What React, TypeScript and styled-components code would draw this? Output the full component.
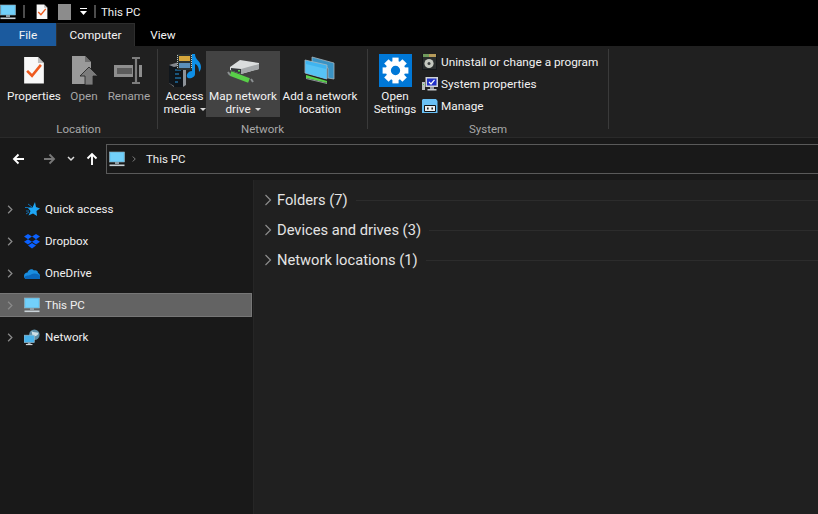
import { FC, ReactNode } from 'react';
import styled, { createGlobalStyle } from 'styled-components';

const GlobalStyle = createGlobalStyle`
    html, body {
        margin: 0;
        padding: 0;
        background: #191919;
    }
    * {
        box-sizing: border-box;
    }
`

const Window = styled.div`
    width: 818px;
    height: 514px;
    overflow: hidden;
    display: flex;
    flex-direction: column;
    background: #191919;
    color: #fff;
    font-family: Roboto, "Liberation Sans", sans-serif;
    font-size: 12px;
`

const TitleBar = styled.div`
    height: 23px;
    background: #000;
    display: flex;
    align-items: center;
`

const TitleDivider = styled.div<{ $left: number }>`
    width: 2px;
    height: 13px;
    background: #4c4c4c;
    margin-left: ${props => props.$left}px;
    margin-right: 11px;
`

const TitleSpacer = styled.div<{ $width: number }>`
    width: ${props => props.$width}px;
    flex: none;
`

const TitleText = styled.span`
    font-size: 11.5px;
    color: #f0f0f0;
    margin-left: -6px;
`

const TabBar = styled.div`
    height: 23px;
    background: #000;
    display: flex;
`

const Tab = styled.div<{ $kind?: 'file' | 'active' }>`
    width: ${props => props.$kind === 'active' ? '79px' : '56px'};
    display: flex;
    align-items: center;
    justify-content: center;
    color: #f4f4f4;
    font-size: 11.8px;
    background: ${props => props.$kind === 'file' ? '#1b5a9e' : props.$kind === 'active' ? '#202020' : 'transparent'};
    border: ${props => props.$kind === 'active' ? '1px solid #2e2e2e' : 'none'};
    border-bottom: none;
`

const Ribbon = styled.div`
    height: 92px;
    background: #202020;
    display: flex;
    padding-top: 3px;
    border-bottom: 1px solid #2a2a2a;
`

const Group = styled.div<{ $width: number }>`
    width: ${props => props.$width}px;
    display: flex;
    flex-direction: column;
    border-right: 1px solid #3a3a3a;
    height: 80px;
    flex: none;
`

const GroupBody = styled.div<{ $left: number }>`
    height: 68px;
    display: flex;
    padding-left: ${props => props.$left}px;
`

const GroupLabel = styled.div`
    height: 20px;
    margin-top: 2px;
    text-align: center;
    font-size: 11.5px;
    color: #a8a8a8;
    line-height: 20px;
`

const LargeButton = styled.div<{ $width: number; $hot?: boolean; $dim?: boolean }>`
    width: ${props => props.$width}px;
    height: 66px;
    margin-top: 2px;
    display: flex;
    flex-direction: column;
    align-items: center;
    flex: none;
    background: ${props => props.$hot ? '#434343' : 'transparent'};
    border: 1px solid ${props => props.$hot ? '#434343' : 'transparent'};
    color: ${props => props.$dim ? '#a6a6a6' : '#f2f2f2'};
`

const LargeIcon = styled.div`
    height: 35px;
    width: 100%;
    display: flex;
    align-items: center;
    justify-content: center;
    margin-top: 1px;
`

const LargeLabel = styled.div`
    text-align: center;
    line-height: 13px;
    margin-top: 2px;
    font-size: 11.7px;
    white-space: nowrap;
`

const Caret = styled.span`
    display: inline-block;
    width: 0;
    height: 0;
    border-left: 3px solid transparent;
    border-right: 3px solid transparent;
    border-top: 3px solid #d8d8d8;
    margin-left: 4px;
    vertical-align: 2px;
`

const SmallList = styled.div`
    display: flex;
    flex-direction: column;
    margin-top: 2px;
    margin-left: 4px;
`

const SmallRow = styled.div`
    height: 22px;
    display: flex;
    align-items: center;
    gap: 3px;
    font-size: 11.8px;
    color: #f2f2f2;
    white-space: nowrap;
`

const NavBar = styled.div`
    height: 41px;
    display: flex;
    align-items: center;
    padding-left: 12px;
    background: #191919;
    flex: none;
`

const NavIcon = styled.div<{ $width: number }>`
    width: ${props => props.$width}px;
    display: flex;
    align-items: center;
    flex: none;
`

const AddressBar = styled.div`
    flex: 1;
    height: 30px;
    margin-right: -2px;
    border: 1px solid #5a5a5a;
    display: flex;
    align-items: center;
    padding-left: 2px;
    color: #eee;
    font-size: 11.5px;
`

const CrumbArrow = styled.div`
    margin-left: 7px;
    display: flex;
`

const Crumb = styled.span`
    margin-left: 10px;
`

const Content = styled.div`
    flex: 1;
    display: flex;
    min-height: 0;
`

const Sidebar = styled.div`
    width: 253px;
    flex: none;
    background: #191919;
    padding-top: 18px;
    display: flex;
    flex-direction: column;
`

const TreeRow = styled.div<{ $selected?: boolean }>`
    height: 24px;
    margin-bottom: 8px;
    width: 252px;
    display: flex;
    align-items: center;
    padding-left: 7px;
    font-size: 11.6px;
    color: #f0f0f0;
    background: ${props => props.$selected ? '#636363' : 'transparent'};
    border: 1px solid ${props => props.$selected ? '#777' : 'transparent'};
    border-left-width: 0;
`

const TreeIcon = styled.div`
    width: 16px;
    height: 16px;
    margin-left: 11px;
    margin-right: 5px;
    display: flex;
    align-items: center;
    justify-content: center;
`

const Main = styled.div`
    flex: 1;
    background: #202020;
    border-left: 1px solid #262626;
    margin-top: 1px;
    padding-top: 5px;
`

const Section = styled.div`
    height: 30px;
    display: flex;
    align-items: center;
    padding-left: 10px;
    font-size: 14.7px;
    color: #e4e4e4;
`

const SectionTitle = styled.span`
    margin-left: 5px;
    white-space: nowrap;
`

const SectionRule = styled.div`
    flex: 1;
    height: 1px;
    margin-left: 8px;
    background: #2c2c2c;
`

const Chevron: FC<{ size?: number; color: string; weight?: number }> = ({ size = 8, color, weight = 1.2 }) => (
    <svg width={size} height={size * 1.5} viewBox="0 0 8 12" fill="none">
        <path d="M1.5 1 L6.5 6 L1.5 11" stroke={color} strokeWidth={weight} />
    </svg>
)

const PcIcon: FC = () => (
    <svg width="16" height="16" viewBox="0 0 16 16">
        <rect x="0.5" y="1" width="15" height="10" fill="#5cc4f2" stroke="#9fb7c4" strokeWidth="0.6" />
        <rect x="1.5" y="2" width="13" height="8" fill="#72d0fa" />
        <rect x="6" y="11" width="4" height="2" fill="#8f9ea6" />
        <rect x="0.5" y="13.5" width="15" height="1.6" fill="#c8d2d8" />
    </svg>
)

const DocCheckIcon: FC<{ size: number }> = ({ size }) => (
    <svg width={size} height={size * 1.3} viewBox="0 0 22 29">
        <path d="M1 1 H15 L21 7 V28 H1 Z" fill="#f8f8f8" />
        <path d="M15 1 L21 7 H15 Z" fill="#bdbdbd" />
        <path d="M4 15 L9 20 L18 9" stroke="#ee5a1e" strokeWidth="2.6" fill="none" />
    </svg>
)

const OpenIcon = () => (
    <svg width="27" height="31" viewBox="0 0 27 31">
        <path d="M1 1 H14 L20 7 V29 H1 Z" fill="#9a9a9a" />
        <path d="M14 1 L20 7 H14 Z" fill="#6e6e6e" />
        <path d="M18 12 L27 21 H22 V30 H14 V21 H9 Z" fill="#7b7b7b" stroke="#202020" strokeWidth="0.8" />
    </svg>
)

const RenameIcon = () => (
    <svg width="30" height="27" viewBox="0 0 30 27">
        <rect x="0" y="8" width="28" height="12" fill="#8e8e8e" />
        <rect x="3" y="11" width="15" height="6" fill="#5c5c5c" />
        <rect x="19" y="0" width="6" height="27" fill="#202020" />
        <path d="M18 1 H26 M22 1 V26 M18 26 H26" stroke="#7d7d7d" strokeWidth="2.2" fill="none" />
    </svg>
)

const AccessMediaIcon = () => (
    <svg width="34" height="33" viewBox="0 0 34 33">
        <path d="M1 11 L11 8 L15 11 V33 H6 L1 29 Z" fill="#84888e" />
        <path d="M1 11 L6 13 V32 L1 29 Z" fill="#10161c" />
        <path d="M6 13 L15 11 V33 H6 Z" fill="#0f1419" />
        <path d="M7 16 H13 M7 20 H11 M7 24 H13 M7 28 H10" stroke="#2795e0" strokeWidth="1" />
        <path d="M15 11 L18 13 V31 L15 33 Z" fill="#8d9298" />
        <rect x="9" y="0" width="15" height="16" fill="#2a3130" />
        <path d="M9.5 1 V15 M23.5 1 V15" stroke="#c0c6c0" strokeWidth="1" strokeDasharray="1 1" />
        <rect x="11" y="2" width="11" height="5" fill="#d5a63c" />
        <rect x="11" y="9" width="11" height="5" fill="#5b8fb8" />
        <path d="M24 0 H27 C27 6 33 7 33 13 C33 15 32 17 31 18 C31 14 30 11 27 10 V20 C27 23 23 25 20 24 C17 22 20 17 24 17 Z" fill="#0e8fe6" />
    </svg>
)

const DriveIcon = () => (
    <svg width="33" height="24" viewBox="0 0 33 24">
        <path d="M3 8 L13 1 L32 4 V10 L14 15 L3 11 Z" fill="#dadddd" />
        <path d="M14 10 L32 5 V10 L14 15 Z" fill="#a4a8aa" />
        <path d="M4 9 L14 10 V15 L4 11.5 Z" fill="#34383a" />
        <rect x="11" y="11" width="2" height="1.5" fill="#53e04a" />
        <path d="M3.5 14.5 L22 21.5" stroke="#58cf48" strokeWidth="5" />
        <path d="M1 13 L3 16 M24 20 L26 23" stroke="#8c9092" strokeWidth="2" />
    </svg>
)

const NetworkLocationIcon = () => (
    <svg width="32" height="30" viewBox="0 0 32 30">
        <path d="M8 1 L30 7 V23 L24 22 V12 L8 7 Z" fill="#3a93c4" stroke="#a4b4bc" strokeWidth="0.8" />
        <path d="M1 4 L23 9 V23 L1 17 Z" fill="#3fb4f0" stroke="#a8bac2" strokeWidth="0.8" />
        <path d="M2 8 L22 13 V23 L2 17 Z" fill="#57c3f5" />
        <path d="M2 19 L23 25 V27 L2 22 Z" fill="#5bd14c" />
        <path d="M2 22 L23 27 V28 L2 23 Z" fill="#8e9499" />
    </svg>
)

const SettingsIcon = () => (
    <svg width="33" height="33" viewBox="0 0 32 32">
        <rect width="32" height="32" fill="#0078d7" />
        <g transform="translate(16 16)" fill="#fff">
            {[0, 45, 90, 135, 180, 225, 270, 315].map(angle => (
                <rect key={angle} x="-3" y="-12.5" width="6" height="6" transform={`rotate(${angle})`} />
            ))}
            <path fillRule="evenodd" d="M0 -9.5 A9.5 9.5 0 1 1 0 9.5 A9.5 9.5 0 1 1 0 -9.5 Z M0 -4.5 A4.5 4.5 0 1 0 0 4.5 A4.5 4.5 0 1 0 0 -4.5 Z" />
        </g>
    </svg>
)

const UninstallIcon = () => (
    <svg width="16" height="16" viewBox="0 0 16 16">
        <rect x="0" y="0" width="15" height="16" fill="#14181a" />
        <rect x="1" y="0" width="6" height="3" fill="#6f9a5c" />
        <rect x="7" y="0" width="7" height="3" fill="#b59a5a" />
        <rect x="1" y="3" width="13" height="12" fill="#2a2e2e" />
        <circle cx="7" cy="9.5" r="4.6" fill="#c4c8c0" />
        <circle cx="7" cy="9.5" r="1.5" fill="#3c4040" />
    </svg>
)

const SystemPropsIcon = () => (
    <svg width="16" height="16" viewBox="0 0 16 16">
        <rect x="0" y="6" width="3" height="8" fill="#b8bcbc" />
        <rect x="1" y="8" width="1" height="1" fill="#4ecf45" />
        <rect x="3.5" y="1" width="12.5" height="10" fill="#d0d4d8" />
        <rect x="5" y="2.5" width="9.5" height="7" fill="#2030c8" />
        <path d="M7 6 L9 8 L12.5 3.8" stroke="#fff" strokeWidth="1.2" fill="none" />
        <rect x="8" y="11" width="4" height="2" fill="#9a9ea2" />
        <rect x="5.5" y="13" width="9" height="1.5" fill="#c4c8cc" />
    </svg>
)

const ManageIcon = () => (
    <svg width="16" height="16" viewBox="0 0 16 16">
        <path d="M1 1 H14 L15.5 3 V15 H0 V2 Z" fill="#69c0f5" />
        <rect x="2" y="7" width="12" height="7" rx="1" fill="#101214" />
        <rect x="3" y="8" width="10" height="5" fill="#eceff0" />
        <rect x="5" y="9.5" width="1.6" height="2" fill="#222" />
        <rect x="9.4" y="9.5" width="1.6" height="2" fill="#222" />
    </svg>
)

const QuickAccessIcon = () => (
    <svg width="16" height="16" viewBox="0 0 16 16">
        <path d="M11 1 L12 6 L16 7.5 L12.5 10 L13 15 L9 12.5 L4.5 14.5 L6.5 10 L3.5 6.5 L8.5 6.5 Z" fill="#1ea6f5" />
        <path d="M4 3 L8 6 M1 6.5 H4 M2 10 H5 M2 13 L5 11" stroke="#0f6fb4" strokeWidth="1" />
    </svg>
)

const DropboxIcon = () => (
    <svg width="16" height="15" viewBox="0 0 16 15">
        <path d="M4 0 L8 2.6 L4 5.2 L0 2.6 Z M12 0 L16 2.6 L12 5.2 L8 2.6 Z M4 5.2 L8 7.8 L4 10.4 L0 7.8 Z M12 5.2 L16 7.8 L12 10.4 L8 7.8 Z M8 9 L12 11.6 L8 14.4 L4 11.6 Z" fill="#0b61ff" />
    </svg>
)

const OneDriveIcon = () => (
    <svg width="16" height="11" viewBox="0 0 16 11">
        <path d="M3.5 4.5 C4 1.5 8 0 10 2.5 C12 1.8 14 3 14 5 C15.5 5.5 16 7 16 8 L16 11 H2.5 C0.5 11 0 9.5 0 8 C0 6 1.5 4.5 3.5 4.5 Z" fill="#1a8ee0" />
        <path d="M0.4 9 C2 7 5 8 7 6.5 C10 5 13 5 16 8 L16 11 H2.5 C1.2 11 0.6 10 0.4 9 Z" fill="#0a68bd" />
    </svg>
)

const NetworkIcon = () => (
    <svg width="17" height="17" viewBox="0 0 17 17">
        <circle cx="11" cy="5.6" r="5.6" fill="#5d8ea8" />
        <path d="M8 1.5 C10 3.5 13 2.5 15.5 3.5 C15 7 11 8 9 6.5 Z" fill="#cfe0e8" />
        <rect x="0" y="6" width="11" height="8" fill="#48b2ea" stroke="#a8bcc6" strokeWidth="0.6" />
        <rect x="4" y="14" width="3" height="1.4" fill="#a0a8ad" />
        <rect x="2" y="15.4" width="7" height="1.2" fill="#d0d4d8" />
    </svg>
)

const NavArrow: FC<{ d: string; color: string }> = ({ d, color }) => (
    <svg width="14" height="14" viewBox="0 0 14 14" fill="none">
        <path d={d} stroke={color} strokeWidth="1.9" />
    </svg>
)

const TreeItem: FC<{ icon: ReactNode; label: string; selected?: boolean }> = ({ icon, label, selected }) => (
    <TreeRow $selected={selected}>
        <Chevron size={6} color="#8a8a8a" weight={1.7} />
        <TreeIcon>{icon}</TreeIcon>
        {label}
    </TreeRow>
)

const GroupSection: FC<{ label: string }> = ({ label }) => (
    <Section>
        <Chevron color="#8c8c8c" />
        <SectionTitle>{label}</SectionTitle>
        <SectionRule />
    </Section>
)

const App: FC = () => {
    return (
        <Window>
            <GlobalStyle />
            <TitleBar>
                <PcIcon />
                <TitleDivider $left={7} />
                <DocCheckIcon size={12} />
                <TitleSpacer $width={10} />
                <svg width="13" height="16" viewBox="0 0 13 16">
                    <rect width="13" height="16" fill="#8c8c8c" />
                </svg>
                <TitleSpacer $width={8} />
                <svg width="9" height="8" viewBox="0 0 9 8">
                    <rect x="1" y="0" width="7" height="1" fill="#fff" />
                    <path d="M1 3 H8 L4.5 7 Z" fill="#fff" />
                </svg>
                <TitleDivider $left={6} />
                <TitleText>This PC</TitleText>
            </TitleBar>
            <TabBar>
                <Tab $kind="file">File</Tab>
                <Tab $kind="active">Computer</Tab>
                <Tab>View</Tab>
            </TabBar>
            <Ribbon>
                <Group $width={158}>
                    <GroupBody $left={6}>
                        <LargeButton $width={56}>
                            <LargeIcon><DocCheckIcon size={22} /></LargeIcon>
                            <LargeLabel>Properties</LargeLabel>
                        </LargeButton>
                        <LargeButton $width={44} $dim>
                            <LargeIcon><OpenIcon /></LargeIcon>
                            <LargeLabel>Open</LargeLabel>
                        </LargeButton>
                        <LargeButton $width={46} $dim>
                            <LargeIcon><RenameIcon /></LargeIcon>
                            <LargeLabel>Rename</LargeLabel>
                        </LargeButton>
                    </GroupBody>
                    <GroupLabel>Location</GroupLabel>
                </Group>
                <Group $width={210}>
                    <GroupBody $left={5}>
                        <LargeButton $width={43}>
                            <LargeIcon><AccessMediaIcon /></LargeIcon>
                            <LargeLabel>Access<br />media<Caret /></LargeLabel>
                        </LargeButton>
                        <LargeButton $width={74} $hot>
                            <LargeIcon><DriveIcon /></LargeIcon>
                            <LargeLabel>Map network<br />drive<Caret /></LargeLabel>
                        </LargeButton>
                        <LargeButton $width={80}>
                            <LargeIcon><NetworkLocationIcon /></LargeIcon>
                            <LargeLabel>Add a network<br />location</LargeLabel>
                        </LargeButton>
                    </GroupBody>
                    <GroupLabel>Network</GroupLabel>
                </Group>
                <Group $width={241}>
                    <GroupBody $left={4}>
                        <LargeButton $width={46}>
                            <LargeIcon><SettingsIcon /></LargeIcon>
                            <LargeLabel>Open<br />Settings</LargeLabel>
                        </LargeButton>
                        <SmallList>
                            <SmallRow><UninstallIcon />Uninstall or change a program</SmallRow>
                            <SmallRow><SystemPropsIcon />System properties</SmallRow>
                            <SmallRow><ManageIcon />Manage</SmallRow>
                        </SmallList>
                    </GroupBody>
                    <GroupLabel>System</GroupLabel>
                </Group>
            </Ribbon>
            <NavBar>
                <NavIcon $width={30}><NavArrow d="M12 7 H2 M6.5 2.5 L2 7 L6.5 11.5" color="#fff" /></NavIcon>
                <NavIcon $width={25}><NavArrow d="M2 7 H12 M7.5 2.5 L12 7 L7.5 11.5" color="#777" /></NavIcon>
                <NavIcon $width={18}>
                    <svg width="8" height="6" viewBox="0 0 8 6" fill="none">
                        <path d="M1 1 L4 4 L7 1" stroke="#ddd" strokeWidth="1.5" />
                    </svg>
                </NavIcon>
                <NavIcon $width={21}><NavArrow d="M7 13 V2 M2.5 6.5 L7 2 L11.5 6.5" color="#fff" /></NavIcon>
                <AddressBar>
                    <PcIcon />
                    <CrumbArrow><Chevron size={4} color="#8a8a8a" weight={1.8} /></CrumbArrow>
                    <Crumb>This PC</Crumb>
                </AddressBar>
            </NavBar>
            <Content>
                <Sidebar>
                    <TreeItem icon={<QuickAccessIcon />} label="Quick access" />
                    <TreeItem icon={<DropboxIcon />} label="Dropbox" />
                    <TreeItem icon={<OneDriveIcon />} label="OneDrive" />
                    <TreeItem icon={<PcIcon />} label="This PC" selected />
                    <TreeItem icon={<NetworkIcon />} label="Network" />
                </Sidebar>
                <Main>
                    <GroupSection label="Folders (7)" />
                    <GroupSection label="Devices and drives (3)" />
                    <GroupSection label="Network locations (1)" />
                </Main>
            </Content>
        </Window>
    )
}

export default App;
